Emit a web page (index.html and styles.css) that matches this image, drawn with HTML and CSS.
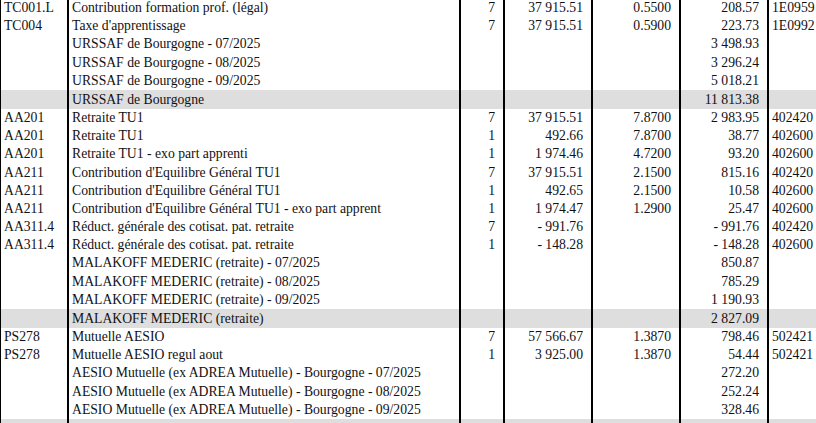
FILE: index.html
```html
<!DOCTYPE html>
<html lang="fr">
<head>
<meta charset="utf-8">
<title>Cotisations</title>
<link rel="stylesheet" href="styles.css">
</head>
<body>
<div class="sheet">
  <div class="row"><div class="c code">TC001.L</div><div class="c lbl">Contribution formation prof. (légal)</div><div class="c num">7</div><div class="c num">37 915.51</div><div class="c num">0.5500</div><div class="c num">208.57</div><div class="c acc">1E0959</div></div>
  <div class="row"><div class="c code">TC004</div><div class="c lbl">Taxe d'apprentissage</div><div class="c num">7</div><div class="c num">37 915.51</div><div class="c num">0.5900</div><div class="c num">223.73</div><div class="c acc">1E0992</div></div>
  <div class="row"><div class="c code"></div><div class="c lbl">URSSAF de Bourgogne - 07/2025</div><div class="c num"></div><div class="c num"></div><div class="c num"></div><div class="c num">3 498.93</div><div class="c acc"></div></div>
  <div class="row"><div class="c code"></div><div class="c lbl">URSSAF de Bourgogne - 08/2025</div><div class="c num"></div><div class="c num"></div><div class="c num"></div><div class="c num">3 296.24</div><div class="c acc"></div></div>
  <div class="row"><div class="c code"></div><div class="c lbl">URSSAF de Bourgogne - 09/2025</div><div class="c num"></div><div class="c num"></div><div class="c num"></div><div class="c num">5 018.21</div><div class="c acc"></div></div>
  <div class="row total"><div class="c code"></div><div class="c lbl">URSSAF de Bourgogne</div><div class="c num"></div><div class="c num"></div><div class="c num"></div><div class="c num">11 813.38</div><div class="c acc"></div></div>
  <div class="row"><div class="c code">AA201</div><div class="c lbl">Retraite TU1</div><div class="c num">7</div><div class="c num">37 915.51</div><div class="c num">7.8700</div><div class="c num">2 983.95</div><div class="c acc">402420</div></div>
  <div class="row"><div class="c code">AA201</div><div class="c lbl">Retraite TU1</div><div class="c num">1</div><div class="c num">492.66</div><div class="c num">7.8700</div><div class="c num">38.77</div><div class="c acc">402600</div></div>
  <div class="row"><div class="c code">AA201</div><div class="c lbl">Retraite TU1 - exo part apprenti</div><div class="c num">1</div><div class="c num">1 974.46</div><div class="c num">4.7200</div><div class="c num">93.20</div><div class="c acc">402600</div></div>
  <div class="row"><div class="c code">AA211</div><div class="c lbl">Contribution d'Equilibre Général TU1</div><div class="c num">7</div><div class="c num">37 915.51</div><div class="c num">2.1500</div><div class="c num">815.16</div><div class="c acc">402420</div></div>
  <div class="row"><div class="c code">AA211</div><div class="c lbl">Contribution d'Equilibre Général TU1</div><div class="c num">1</div><div class="c num">492.65</div><div class="c num">2.1500</div><div class="c num">10.58</div><div class="c acc">402600</div></div>
  <div class="row"><div class="c code">AA211</div><div class="c lbl">Contribution d'Equilibre Général TU1 - exo part apprent</div><div class="c num">1</div><div class="c num">1 974.47</div><div class="c num">1.2900</div><div class="c num">25.47</div><div class="c acc">402600</div></div>
  <div class="row"><div class="c code">AA311.4</div><div class="c lbl">Réduct. générale des cotisat. pat. retraite</div><div class="c num">7</div><div class="c num">- 991.76</div><div class="c num"></div><div class="c num">- 991.76</div><div class="c acc">402420</div></div>
  <div class="row"><div class="c code">AA311.4</div><div class="c lbl">Réduct. générale des cotisat. pat. retraite</div><div class="c num">1</div><div class="c num">- 148.28</div><div class="c num"></div><div class="c num">- 148.28</div><div class="c acc">402600</div></div>
  <div class="row"><div class="c code"></div><div class="c lbl">MALAKOFF MEDERIC (retraite) - 07/2025</div><div class="c num"></div><div class="c num"></div><div class="c num"></div><div class="c num">850.87</div><div class="c acc"></div></div>
  <div class="row"><div class="c code"></div><div class="c lbl">MALAKOFF MEDERIC (retraite) - 08/2025</div><div class="c num"></div><div class="c num"></div><div class="c num"></div><div class="c num">785.29</div><div class="c acc"></div></div>
  <div class="row"><div class="c code"></div><div class="c lbl">MALAKOFF MEDERIC (retraite) - 09/2025</div><div class="c num"></div><div class="c num"></div><div class="c num"></div><div class="c num">1 190.93</div><div class="c acc"></div></div>
  <div class="row total"><div class="c code"></div><div class="c lbl">MALAKOFF MEDERIC (retraite)</div><div class="c num"></div><div class="c num"></div><div class="c num"></div><div class="c num">2 827.09</div><div class="c acc"></div></div>
  <div class="row"><div class="c code">PS278</div><div class="c lbl">Mutuelle AESIO</div><div class="c num">7</div><div class="c num">57 566.67</div><div class="c num">1.3870</div><div class="c num">798.46</div><div class="c acc">502421</div></div>
  <div class="row"><div class="c code">PS278</div><div class="c lbl">Mutuelle AESIO regul aout</div><div class="c num">1</div><div class="c num">3 925.00</div><div class="c num">1.3870</div><div class="c num">54.44</div><div class="c acc">502421</div></div>
  <div class="row"><div class="c code"></div><div class="c lbl">AESIO Mutuelle (ex ADREA Mutuelle) - Bourgogne - 07/2025</div><div class="c num"></div><div class="c num"></div><div class="c num"></div><div class="c num">272.20</div><div class="c acc"></div></div>
  <div class="row"><div class="c code"></div><div class="c lbl">AESIO Mutuelle (ex ADREA Mutuelle) - Bourgogne - 08/2025</div><div class="c num"></div><div class="c num"></div><div class="c num"></div><div class="c num">252.24</div><div class="c acc"></div></div>
  <div class="row"><div class="c code"></div><div class="c lbl">AESIO Mutuelle (ex ADREA Mutuelle) - Bourgogne - 09/2025</div><div class="c num"></div><div class="c num"></div><div class="c num"></div><div class="c num">328.46</div><div class="c acc"></div></div>
  <div class="row total"><div class="c code"></div><div class="c lbl"></div><div class="c num"></div><div class="c num"></div><div class="c num"></div><div class="c num"></div><div class="c acc"></div></div>
</div>
</body>
</html>
```
FILE: styles.css
```css
html, body {
  margin: 0;
  padding: 0;
  background: #fff;
  overflow: hidden;
}
body {
  width: 816px;
  height: 423px;
}
.sheet {
  margin-top: -1px;
  width: 857px;
  font-family: "Liberation Serif", "Times New Roman", serif;
  font-size: 13.7px;
  color: #111;
}
.row {
  display: grid;
  grid-template-columns: 67px 392px 44px 88px 88px 88px 90px;
  height: 18.2px;
  line-height: 18.2px;
}
.row.total {
  height: 19px;
  line-height: 19px;
  background: #dedede;
}
.c {
  box-sizing: border-box;
  border-left: 2px solid #000;
  white-space: nowrap;
  overflow: hidden;
  padding: 0 3px;
}
.num {
  text-align: right;
  padding-right: 8px;
}
.code {
  border-left-width: 1px;
  padding-left: 3px;
}
```
